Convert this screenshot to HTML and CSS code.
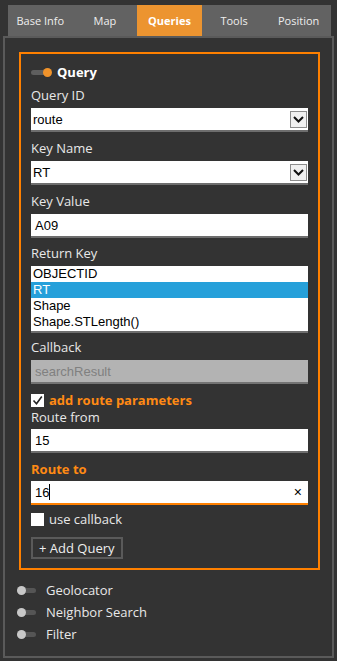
FILE: index.html
```html
<!DOCTYPE html>
<html lang="en">

<head>
    <title>Queries</title>

    <link rel="stylesheet" href="styles.css">
</head>

<body>
    <div class="tabs">
        <div class="tab">Base Info</div>
        <div class="tab">Map</div>
        <div class="tab tab--active">Queries</div>
        <div class="tab">Tools</div>
        <div class="tab">Position</div>
    </div>

    <div class="panel">
        <div class="query">
            <div class="query__head"><span class="toggle toggle--on"></span>Query</div>

            <div class="label label--first">Query ID</div>
            <div class="field field--select">
                <span class="field__text">route</span>
                <span class="arrow"><svg width="11" height="7" viewBox="0 0 11 7"><path d="M1 1l4.5 4.5L10 1" fill="none" stroke="#111" stroke-width="2"/></svg></span>
            </div>

            <div class="label">Key Name</div>
            <div class="field field--select">
                <span class="field__text">RT</span>
                <span class="arrow"><svg width="11" height="7" viewBox="0 0 11 7"><path d="M1 1l4.5 4.5L10 1" fill="none" stroke="#111" stroke-width="2"/></svg></span>
            </div>

            <div class="label">Key Value</div>
            <div class="field"><span class="field__text">A09</span></div>

            <div class="label label--list">Return Key</div>
            <ul class="list">
                <li>OBJECTID</li>
                <li class="list__selected">RT</li>
                <li>Shape</li>
                <li>Shape.STLength()</li>
            </ul>

            <div class="label label--callback">Callback</div>
            <div class="field field--disabled"><span class="field__text">searchResult</span></div>

            <div class="check check--route">
                <span class="check__box"><svg width="11" height="11" viewBox="0 0 11 11"><path d="M1.5 5.5l3 3.2L9.8 1.5" fill="none" stroke="#222" stroke-width="1.6"/></svg></span>
                add route parameters
            </div>

            <div class="label label--from">Route from</div>
            <div class="field"><span class="field__text">15</span></div>

            <div class="label label--accent">Route to</div>
            <div class="field field--focus">
                <span class="field__text">16</span><span class="caret"></span>
                <span class="clear">×</span>
            </div>

            <div class="check">
                <span class="check__box"></span>
                use callback
            </div>

            <button class="btn">+ Add Query</button>
        </div>

        <div class="module module--first"><span class="toggle"></span>Geolocator</div>
        <div class="module"><span class="toggle"></span>Neighbor Search</div>
        <div class="module"><span class="toggle"></span>Filter</div>
    </div>
</body>

</html>
```

FILE: styles.css
```css
* {
    padding: 0;
    margin: 0;
    box-sizing: border-box;
}

body {
    background: #333;
    color: #e8e8e8;
    font-family: "Open Sans", sans-serif;
    font-size: 13px;
    height: 661px;
    display: flex;
    flex-direction: column;
}

.tabs {
    display: flex;
    height: 31px;
    margin: 5px 6px 0 8px;
}

.tab {
    flex: 1;
    background: #626262;
    color: #eee;
    font-size: 11px;
    line-height: 31px;
    text-align: center;
}

.tab--active {
    background: #ec9430;
    color: #fff;
    font-weight: bold;
}

.panel {
    flex: 1;
    margin: 0 3px 3px;
    border: 2px solid #5a5a5a;
    padding: 14px 12px 0 14px;
}

.query {
    border: 2px solid #ff8000;
    padding: 9px 10px 9px;
    display: flex;
    flex-direction: column;
}

.query__head {
    display: flex;
    align-items: center;
    gap: 5px;
    line-height: 18px;
    font-weight: bold;
    color: #fff;
}

.toggle {
    position: relative;
    width: 21px;
    height: 9px;
    flex: none;
}

.toggle::before {
    content: '';
    position: absolute;
    left: 0;
    right: 2px;
    top: 2px;
    height: 5px;
    border-radius: 3px;
    background: #555;
}

.toggle::after {
    content: '';
    position: absolute;
    left: 0;
    top: 0;
    width: 9px;
    height: 9px;
    border-radius: 50%;
    background: #c8c8c8;
}

.toggle--on::before {
    background: #5e5e5e;
}

.toggle--on::after {
    left: auto;
    right: 0;
    background: #f0932b;
}

.label {
    line-height: 20px;
    margin: 6px 0 3px;
}

.label--first {
    margin-top: 4px;
}

.label--list {
    margin-top: 5px;
}

.label--callback {
    margin-top: 4px;
}

.label--from {
    margin-top: 0;
    line-height: 18px;
}

.label--accent {
    color: #ff8a14;
    font-weight: bold;
    margin-bottom: 2px;
}

.field {
    height: 24px;
    background: #fff;
    border-bottom: 2px solid #6e6e6e;
    display: flex;
    align-items: center;
    padding: 0 4px;
    color: #000;
    font-family: "Liberation Sans", Arial, sans-serif;
    font-size: 13px;
}

.field--select {
    padding: 0 1px 0 2px;
}

.field__text {
    flex: none;
}

.arrow {
    margin-left: auto;
    width: 17px;
    height: 17px;
    border: 1px solid #8c8c8c;
    background: #f0f0f0;
    display: flex;
    align-items: center;
    justify-content: center;
}

.field--disabled {
    background: #b3b3b3;
    color: #808080;
    border-bottom-color: #747474;
}

.field--focus {
    border-bottom-color: #ff8000;
}

.caret {
    width: 1px;
    height: 16px;
    background: #000;
}

.clear {
    margin-left: auto;
    margin-right: 2px;
    font-size: 14px;
}

.list {
    list-style: none;
    height: 67px;
    background: #fff;
    border-bottom: 2px solid #6e6e6e;
    color: #000;
    font-family: "Liberation Sans", Arial, sans-serif;
    font-size: 13px;
    line-height: 16px;
}

.list li {
    padding-left: 2px;
}

.list .list__selected {
    background: #26a0da;
    color: #fff;
}

.check {
    display: flex;
    align-items: center;
    gap: 5px;
    line-height: 16px;
    margin-top: 6px;
}

.check--route {
    margin-top: 8px;
    color: #ff8a14;
    font-weight: bold;
}

.check__box {
    width: 13px;
    height: 13px;
    background: #fff;
    display: flex;
    align-items: center;
    justify-content: center;
}

.btn {
    align-self: flex-start;
    margin-top: 10px;
    height: 22px;
    padding: 0 6px;
    border: 2px solid #5a5a5a;
    background: transparent;
    color: #eee;
    font-family: "Open Sans", sans-serif;
    font-size: 13px;
}

.module {
    display: flex;
    align-items: center;
    gap: 8px;
    height: 22px;
    margin-left: -2px;
}

.module--first {
    margin-top: 9px;
}
```
